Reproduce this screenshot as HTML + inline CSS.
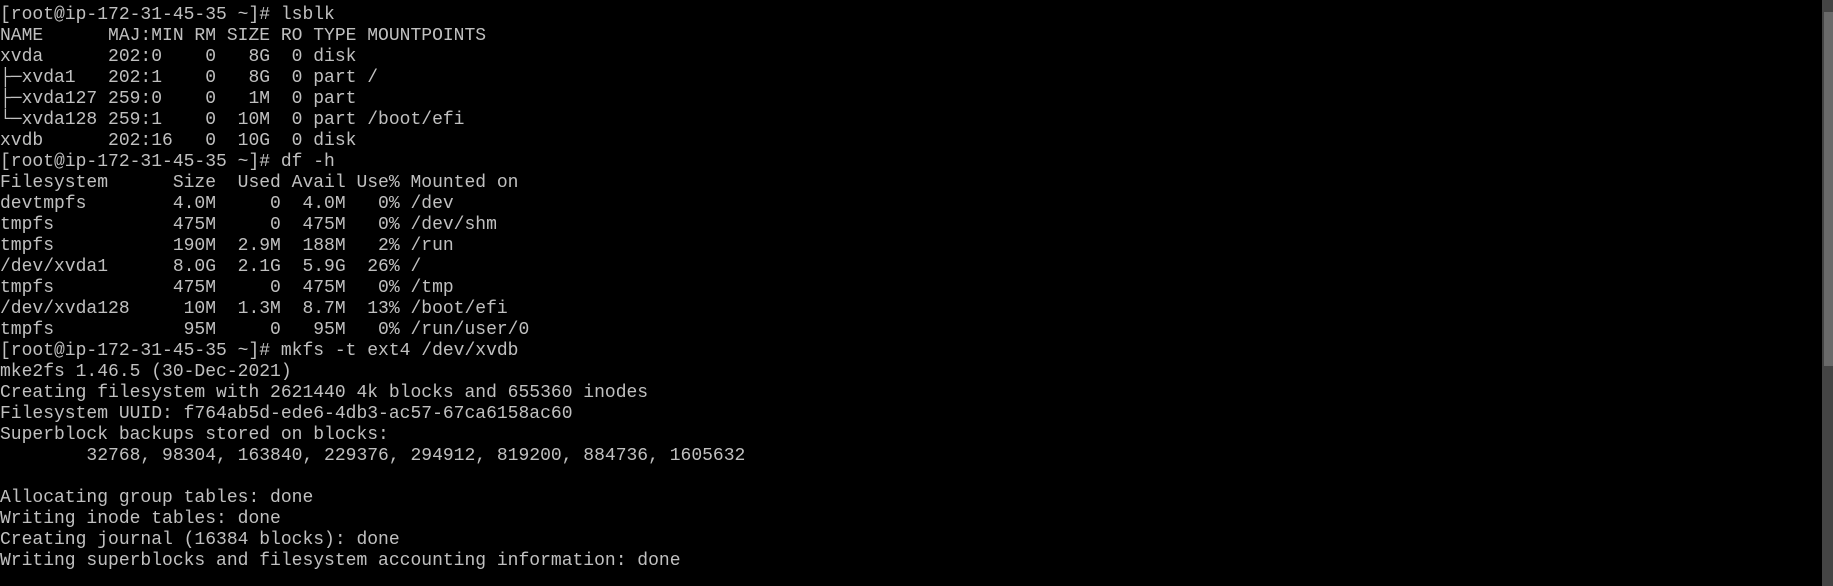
<!DOCTYPE html>
<html><head><meta charset="utf-8"><style>
html,body{margin:0;padding:0;background:#000;width:1833px;height:586px;overflow:hidden}
pre{position:absolute;left:0;top:5px;margin:0;font-family:"Liberation Mono",monospace;font-size:18px;line-height:21px;color:#c0c0c0;white-space:pre}
.track{position:absolute;left:1822px;top:0;width:11px;height:586px;background:#444}
.thumb{position:absolute;left:1824px;top:12px;width:9px;height:354px;background:#6a6a6a}
</style></head><body>
<pre>[root@ip-172-31-45-35 ~]# lsblk
NAME      MAJ:MIN RM SIZE RO TYPE MOUNTPOINTS
xvda      202:0    0   8G  0 disk
├─xvda1   202:1    0   8G  0 part /
├─xvda127 259:0    0   1M  0 part
└─xvda128 259:1    0  10M  0 part /boot/efi
xvdb      202:16   0  10G  0 disk
[root@ip-172-31-45-35 ~]# df -h
Filesystem      Size  Used Avail Use% Mounted on
devtmpfs        4.0M     0  4.0M   0% /dev
tmpfs           475M     0  475M   0% /dev/shm
tmpfs           190M  2.9M  188M   2% /run
/dev/xvda1      8.0G  2.1G  5.9G  26% /
tmpfs           475M     0  475M   0% /tmp
/dev/xvda128     10M  1.3M  8.7M  13% /boot/efi
tmpfs            95M     0   95M   0% /run/user/0
[root@ip-172-31-45-35 ~]# mkfs -t ext4 /dev/xvdb
mke2fs 1.46.5 (30-Dec-2021)
Creating filesystem with 2621440 4k blocks and 655360 inodes
Filesystem UUID: f764ab5d-ede6-4db3-ac57-67ca6158ac60
Superblock backups stored on blocks:
        32768, 98304, 163840, 229376, 294912, 819200, 884736, 1605632

Allocating group tables: done
Writing inode tables: done
Creating journal (16384 blocks): done
Writing superblocks and filesystem accounting information: done
</pre>
<div class="track"></div><div class="thumb"></div>
</body></html>
